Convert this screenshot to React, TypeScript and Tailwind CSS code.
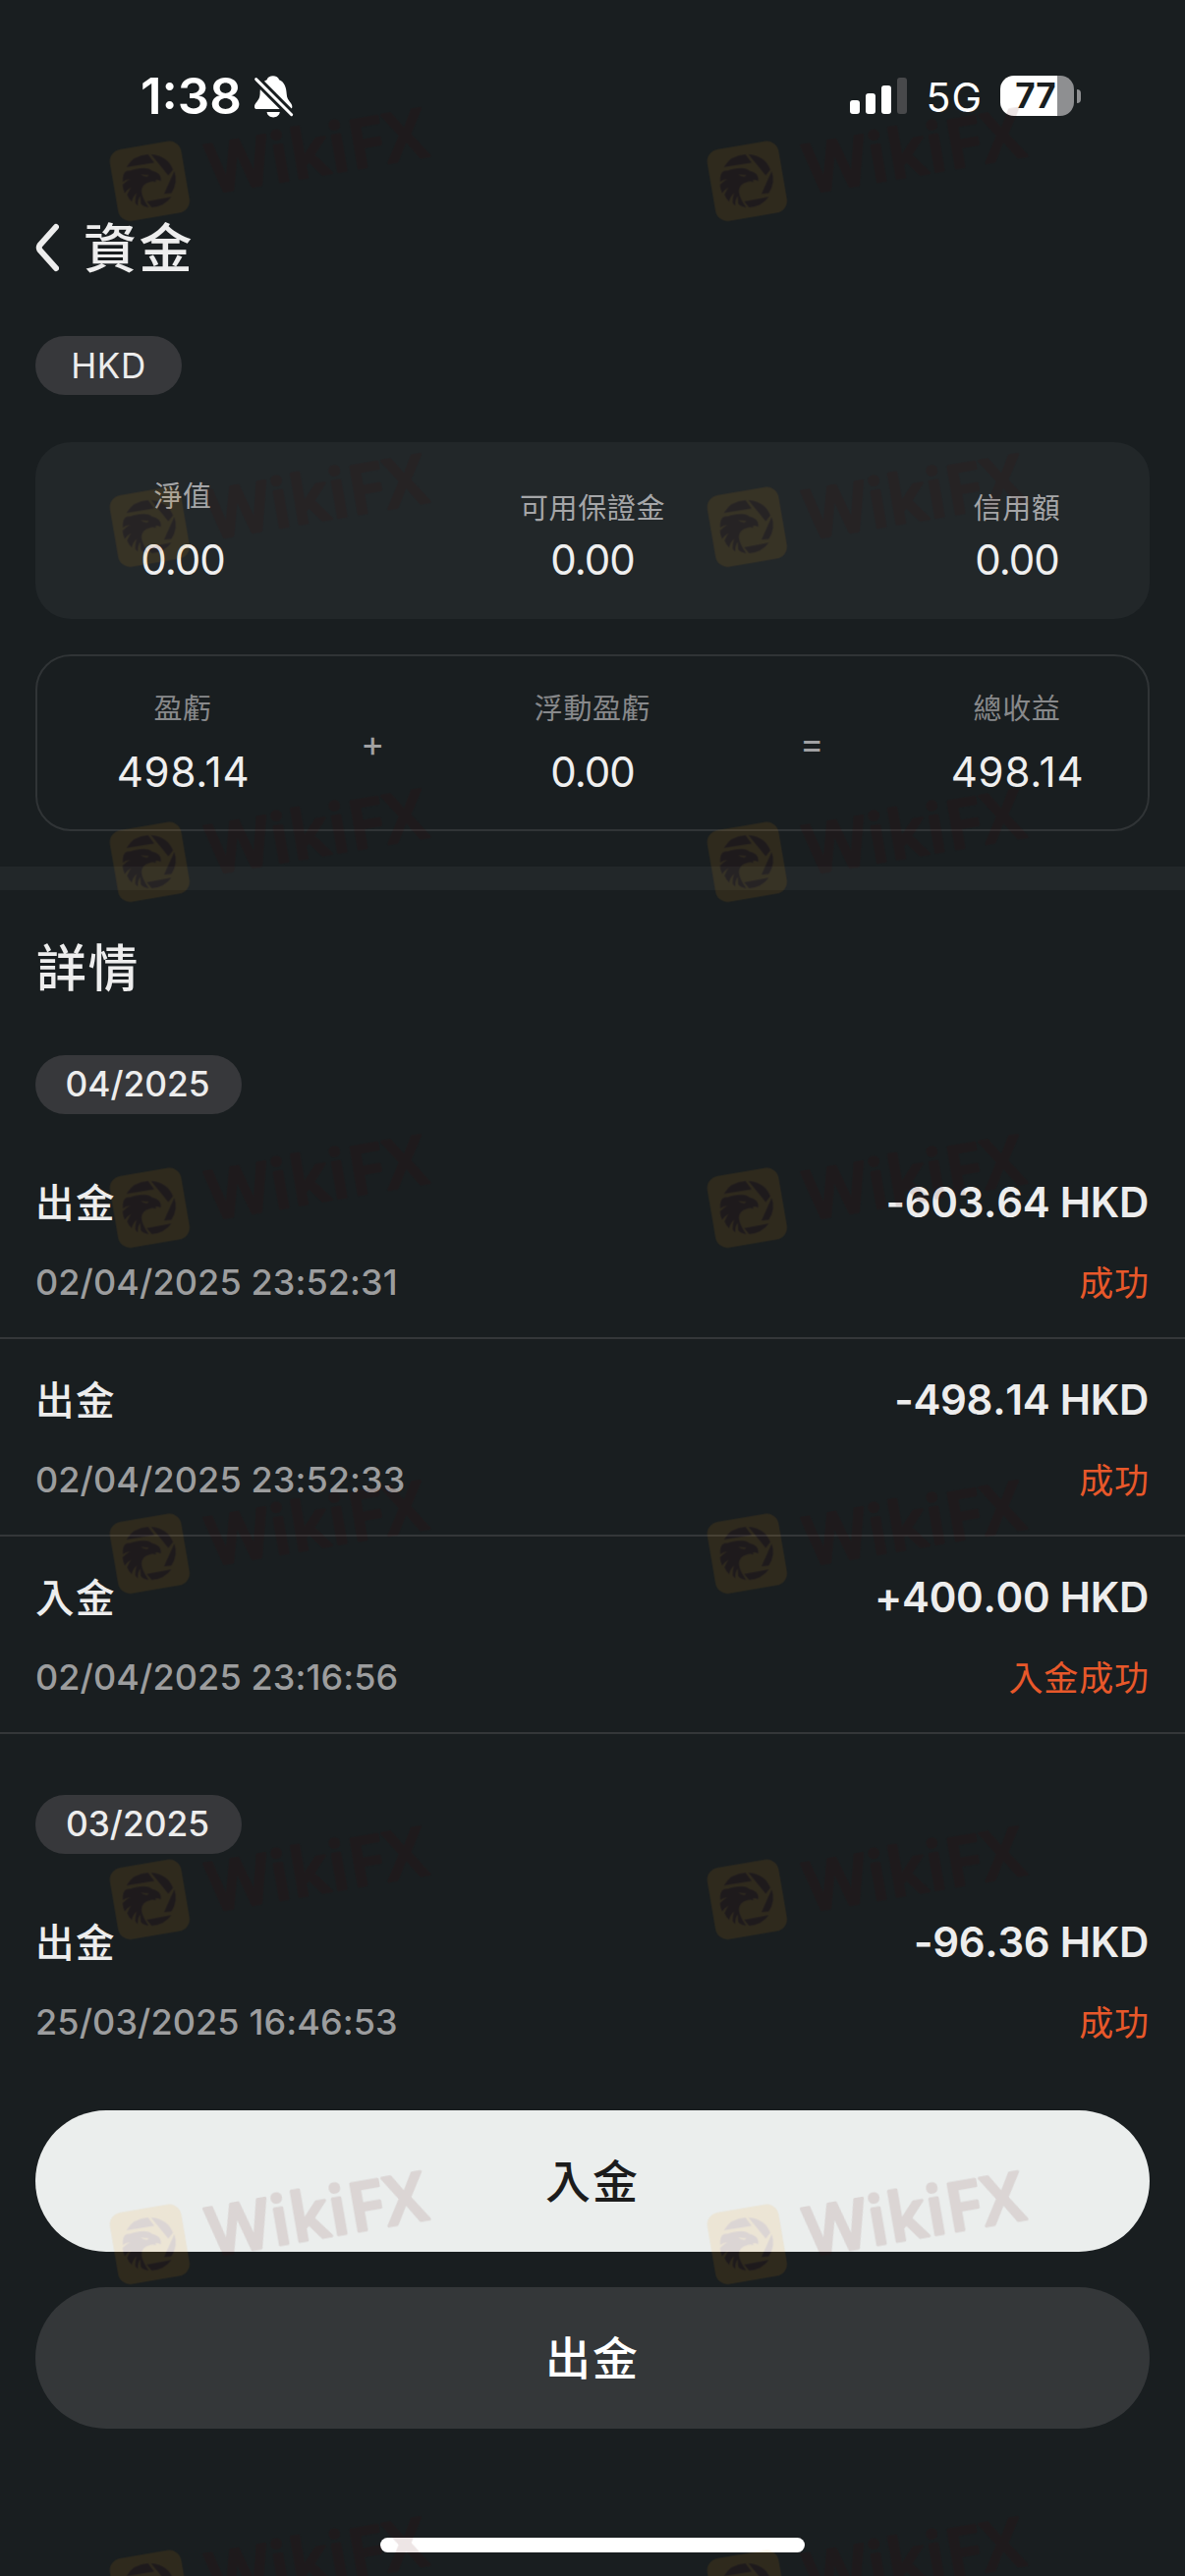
import type { ReactNode } from 'react';

function MutedBell() {
  return (
    <svg viewBox="50 45 130 140" className="h-[47px] w-[43px]">
      <path
        fill="#fff"
        d="M94 63C98 47 128 47 132 63C149 70 154 87 155 107C156 128 172 134 172 145Q172 153 164 153H64Q56 153 56 145C56 134 72 128 73 107C73 87 77 70 94 63Z"
      />
      <path fill="#fff" d="M94 162H134C131 184 97 184 94 162Z" />
      <path stroke="#191e20" strokeWidth="27" d="M52 52L178 178" />
      <path stroke="#fff" strokeWidth="9" strokeLinecap="round" d="M61 61L170 170" />
    </svg>
  );
}

function StatusBar() {
  return (
    <header className="flex h-[196px] items-start pt-[72px] pr-[106px] pl-[143px] text-white">
      <span className="text-[51px] leading-[52px] font-semibold">1:38</span>
      <span className="ml-[11px] pt-[3px]">
        <MutedBell />
      </span>
      <div className="ml-auto flex h-[51px] items-center">
        <div className="flex h-[37px] items-end gap-[6px]">
          <i className="h-[14px] w-[10px] rounded-[3px] bg-white" />
          <i className="h-[21px] w-[10px] rounded-[3px] bg-white" />
          <i className="h-[29px] w-[10px] rounded-[3px] bg-white" />
          <i className="h-[37px] w-[10px] rounded-[3px] bg-[#48494b]" />
        </div>
        <span className="ml-[19px] pt-[2px] text-[41px] leading-[52px] tracking-[1px]">5G</span>
        <div className="ml-[18px] flex h-[41px] w-[75px] items-center justify-center rounded-[14px] bg-[linear-gradient(90deg,#fff_58px,#8e8f91_58px)]">
          <span className="pr-[3px] text-[35px] leading-[41px] font-bold text-[#191e20]">77</span>
        </div>
        <i className="ml-[3px] h-[14px] w-[4px] rounded-r-full bg-[#8e8f91]" />
      </div>
    </header>
  );
}

function Pill({ className, children }: { className: string; children: ReactNode }) {
  return (
    <div className={`ml-9 flex h-[60px] items-center justify-center rounded-full bg-[#37383b] text-[#ededed] ${className}`}>
      {children}
    </div>
  );
}

function Stat({ label, value, className, tone, tracking }: { label: string; value: string; className: string; tone: string; tracking: string }) {
  return (
    <div className={`flex w-[200px] flex-col items-center ${className}`}>
      <span className={`text-[29px] leading-[36px] tracking-[0.6px] ${tone}`}>{label}</span>
      <span className={`text-[42px] leading-[50px] text-[#efefef] ${tracking}`}>{value}</span>
    </div>
  );
}

type Entry = { type: string; time: string; amount: string; status: string };

function Row({ type, time, amount, status, last = false }: Entry & { last?: boolean }) {
  return (
    <li className={`h-[201px] px-9 pt-[37px] ${last ? '' : 'border-b-2 border-[#343739]'}`}>
      <div className="flex justify-between leading-[50px] text-[#ededed]">
        <span className="pt-px text-[39.5px] font-medium tracking-[1.4px]">{type}</span>
        <span className="pr-px text-[42px] font-semibold tracking-[-0.3px] [font-kerning:none]">{amount}</span>
      </div>
      <div className="mt-[31px] flex justify-between leading-[49px]">
        <span className="text-[36px] font-medium tracking-[0.1px] text-[#9c9d9e] [font-kerning:none]">{time}</span>
        <span className="pt-px text-[35px] tracking-[0.9px] text-[#e8582a]">{status}</span>
      </div>
    </li>
  );
}

function Watermark({ className }: { className: string }) {
  return (
    <svg viewBox="0 -90 1200 660" className={`absolute -mt-[30px] h-[220px] w-[400px] ${className}`}>
      <g opacity="0.105">
        <rect x="76.5" y="172.5" width="221" height="221" rx="37" fill="#f09a10" transform="rotate(-9.7 187 283)" />
        <g fill="#540608">
          <path d="M116 240Q136 204 182 201L201 227Z" />
          <path d="M191 201Q243 206 258 248L244 266Z" />
          <path d="M262 252Q275 285 253 320L231 322Z" />
          <path d="M178 345L253 331Q232 361 193 363Z" />
          <path d="M107 263Q112 249 128 251Q145 243 170 243Q187 243 193 251Q213 256 219 267Q223 275 221 283Q213 278 204 280Q207 283 206 286Q196 282 187 286Q163 291 162 314Q163 334 184 363Q168 362 160 352L158 329Q149 342 151 358Q145 354 143 349Q143 331 147 320Q134 332 133 346Q123 338 118 325Q124 309 131 302Q119 308 111 320Q105 308 104 294Q114 283 127 277Q114 278 105 285Q104 272 107 263ZM160 262Q168 271 181 269L184 264Q172 265 160 262Z" />
        </g>
        <text
          x="0"
          y="0"
          transform="translate(376 321) rotate(-9.8)"
          fontSize="204"
          textLength="676"
          className="fill-[#540608] stroke-[#540608] stroke-[9px] font-['Open_Sans'] font-semibold [stroke-linejoin:round]"
        >
          WikiFX
        </text>
      </g>
    </svg>
  );
}

const april: Entry[] = [
  { type: '出金', time: '02/04/2025 23:52:31', amount: '-603.64 HKD', status: '成功' },
  { type: '出金', time: '02/04/2025 23:52:33', amount: '-498.14 HKD', status: '成功' },
  { type: '入金', time: '02/04/2025 23:16:56', amount: '+400.00 HKD', status: '入金成功' },
];

export default function App() {
  return (
    <div
      lang="zh-Hant"
      className="relative flex h-[2622px] w-[1206px] flex-col overflow-hidden bg-[#191e20] font-['Inter','Noto_Sans_CJK_TC',sans-serif]"
    >
      <StatusBar />

      <div className="flex h-[112px] items-center pl-9">
        <svg viewBox="0 0 24 50" className="h-[50px] w-[24px]" fill="none" stroke="#ededed" strokeWidth="6" strokeLinecap="round" strokeLinejoin="round">
          <path d="M21 4L4.500 22.500Q3 25 4.500 27.500L21 46" />
        </svg>
        <h1 className="pt-[3px] pl-[25px] text-[54px] leading-[60px] font-medium tracking-[2.5px] text-[#ededed]">資金</h1>
      </div>

      <Pill className="mt-[34px] w-[149px] text-[35px] tracking-[0.6px]">HKD</Pill>

      <section className="mx-9 mt-12 flex h-[180px] rounded-[36px] bg-[#222729] pl-[50px]">
        <Stat label="淨值" value="0.00" className="gap-[21px] pt-[38px]" tone="text-[#a5a6a8]" tracking="tracking-[-1px]" />
        <Stat label="可用保證金" value="0.00" className="ml-[217px] gap-[9px] pt-[50px]" tone="text-[#a5a6a8]" tracking="tracking-[-1px]" />
        <Stat label="信用額" value="0.00" className="ml-[232px] gap-[9px] pt-[50px]" tone="text-[#a5a6a8]" tracking="tracking-[-1px]" />
      </section>

      <section className="mx-9 mt-9 flex h-[180px] rounded-[36px] border-2 border-[#303436] pl-12">
        <Stat label="盈虧" value="498.14" className="gap-[21px] pt-[36px]" tone="text-[#88898b]" tracking="tracking-[0.8px] pl-px" />
        <span className="ml-[81px] w-6 pt-[71px] text-[37px] leading-[36px] text-[#a0a1a3]">+</span>
        <Stat label="浮動盈虧" value="0.00" className="ml-[112px] gap-[21px] pt-[36px]" tone="text-[#88898b]" tracking="tracking-[-1px]" />
        <span className="ml-[111px] w-6 pt-[71px] text-[37px] leading-[36px] text-[#a0a1a3]">=</span>
        <Stat label="總收益" value="498.14" className="ml-[97px] gap-[21px] pt-[36px]" tone="text-[#88898b]" tracking="tracking-[0.8px] pl-px" />
      </section>

      <div className="mt-9 h-6 bg-[#222729]" />

      <h2 className="mt-[50px] pl-[37px] text-[51px] leading-[60px] font-medium tracking-[1.5px] text-[#ededed]">詳情</h2>

      <Pill className="mt-[58px] w-[210px] pr-[2px] text-[35.3px] font-medium">04/2025</Pill>
      <ul className="mt-7">
        {april.map((e) => (
          <Row key={e.time} {...e} />
        ))}
      </ul>

      <Pill className="mt-[62px] w-[210px] pr-[2px] text-[35.3px] font-medium">03/2025</Pill>
      <ul className="mt-7">
        <Row type="出金" time="25/03/2025 16:46:53" amount="-96.36 HKD" status="成功" last />
      </ul>

      <div className="mx-9 mt-8 flex flex-col gap-9 text-[46px] font-medium tracking-[2px]">
        <button className="h-36 rounded-full bg-[#ebeeed] text-[#1c1c1c]">入金</button>
        <button className="h-36 rounded-full bg-[#343739] text-white">出金</button>
      </div>

      <div className="mx-auto mt-[111px] h-[15px] w-[432px] rounded-full bg-white" />

      <div className="pointer-events-none absolute inset-0">
        <Watermark className="left-[90px] top-[90px]" />
        <Watermark className="left-[698px] top-[90px]" />
        <Watermark className="left-[90px] top-[442px]" />
        <Watermark className="left-[698px] top-[442px]" />
        <Watermark className="left-[90px] top-[783px]" />
        <Watermark className="left-[698px] top-[783px]" />
        <Watermark className="left-[90px] top-[1135px]" />
        <Watermark className="left-[698px] top-[1135px]" />
        <Watermark className="left-[90px] top-[1487px]" />
        <Watermark className="left-[698px] top-[1487px]" />
        <Watermark className="left-[90px] top-[1839px]" />
        <Watermark className="left-[698px] top-[1839px]" />
        <Watermark className="left-[90px] top-[2190px]" />
        <Watermark className="left-[698px] top-[2190px]" />
        <Watermark className="left-[90px] top-[2542px]" />
        <Watermark className="left-[698px] top-[2542px]" />
      </div>
    </div>
  );
}
